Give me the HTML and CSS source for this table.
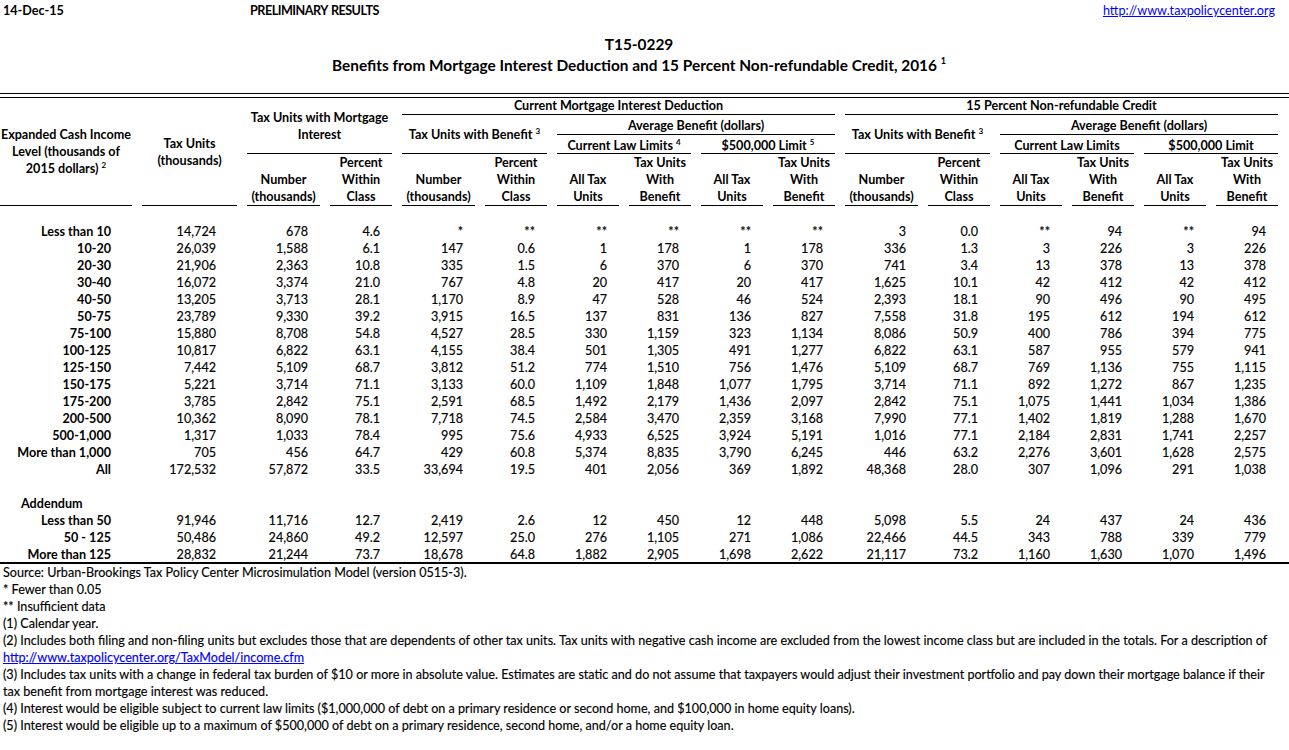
FILE: index.html
```html
<!DOCTYPE html>
<html>
<head>
<meta charset="utf-8">
<title>T15-0229</title>
<link rel="stylesheet" href="styles.css">
</head>
<body>
<div class="top">
  <span class="date">14-Dec-15</span>
  <span class="prelim">PRELIMINARY RESULTS</span>
  <a class="link toplink" href="#">http://www.taxpolicycenter.org</a>
</div>
<div class="title">
  <div>T15-0229</div>
  <div>Benefits from Mortgage Interest Deduction and 15 Percent Non-refundable Credit, 2016 <sup class="tsup">1</sup></div>
</div>
<div class="rule2"></div>
<div class="sheet">
  <div class="h mid u c1 rAll"><span>Expanded Cash Income<br>Level (thousands of<br>2015 dollars) <sup>2</sup></span></div>
  <div class="h mid u c2 rAll"><span>Tax Units<br>(thousands)</span></div>
  <div class="h mid u c3s rTop3"><span>Tax Units with Mortgage<br>Interest</span></div>
  <div class="h u c3 r4"><span>Number<br>(thousands)</span></div>
  <div class="h u c4 r4"><span>Percent<br>Within<br>Class</span></div>

  <div class="h u g1 r1"><span>Current Mortgage Interest Deduction</span></div>
  <div class="h mid u g1a r23"><span>Tax Units with Benefit <sup>3</sup></span></div>
  <div class="h u g1b r2"><span>Average Benefit (dollars)</span></div>
  <div class="h u g1c r3"><span>Current Law Limits <sup>4</sup></span></div>
  <div class="h u g1d r3"><span>$500,000 Limit <sup>5</sup></span></div>
  <div class="h u c5 r4"><span>Number<br>(thousands)</span></div>
  <div class="h u c6 r4"><span>Percent<br>Within<br>Class</span></div>
  <div class="h u c7 r4"><span>All Tax<br>Units</span></div>
  <div class="h u c8 r4"><span>Tax Units<br>With<br>Benefit</span></div>
  <div class="h u c9 r4"><span>All Tax<br>Units</span></div>
  <div class="h u c10 r4"><span>Tax Units<br>With<br>Benefit</span></div>

  <div class="h u g2 r1"><span>15 Percent Non-refundable Credit</span></div>
  <div class="h mid u g2a r23"><span>Tax Units with Benefit <sup>3</sup></span></div>
  <div class="h u g2b r2"><span>Average Benefit (dollars)</span></div>
  <div class="h u g2c r3"><span>Current Law Limits</span></div>
  <div class="h u g2d r3"><span>$500,000 Limit</span></div>
  <div class="h u c11 r4"><span>Number<br>(thousands)</span></div>
  <div class="h u c12 r4"><span>Percent<br>Within<br>Class</span></div>
  <div class="h u c13 r4"><span>All Tax<br>Units</span></div>
  <div class="h u c14 r4"><span>Tax Units<br>With<br>Benefit</span></div>
  <div class="h u c15 r4"><span>All Tax<br>Units</span></div>
  <div class="h u c16 r4"><span>Tax Units<br>With<br>Benefit</span></div>

  <div class="blank"></div>

  <div class="lb">Less than 10</div><div class="d d2">14,724</div><div class="d">678</div><div class="d">4.6</div><div class="d">*</div><div class="d">**</div><div class="d">**</div><div class="d">**</div><div class="d">**</div><div class="d">**</div><div class="d">3</div><div class="d">0.0</div><div class="d">**</div><div class="d">94</div><div class="d">**</div><div class="d">94</div>
  <div class="lb">10-20</div><div class="d d2">26,039</div><div class="d">1,588</div><div class="d">6.1</div><div class="d">147</div><div class="d">0.6</div><div class="d">1</div><div class="d">178</div><div class="d">1</div><div class="d">178</div><div class="d">336</div><div class="d">1.3</div><div class="d">3</div><div class="d">226</div><div class="d">3</div><div class="d">226</div>
  <div class="lb">20-30</div><div class="d d2">21,906</div><div class="d">2,363</div><div class="d">10.8</div><div class="d">335</div><div class="d">1.5</div><div class="d">6</div><div class="d">370</div><div class="d">6</div><div class="d">370</div><div class="d">741</div><div class="d">3.4</div><div class="d">13</div><div class="d">378</div><div class="d">13</div><div class="d">378</div>
  <div class="lb">30-40</div><div class="d d2">16,072</div><div class="d">3,374</div><div class="d">21.0</div><div class="d">767</div><div class="d">4.8</div><div class="d">20</div><div class="d">417</div><div class="d">20</div><div class="d">417</div><div class="d">1,625</div><div class="d">10.1</div><div class="d">42</div><div class="d">412</div><div class="d">42</div><div class="d">412</div>
  <div class="lb">40-50</div><div class="d d2">13,205</div><div class="d">3,713</div><div class="d">28.1</div><div class="d">1,170</div><div class="d">8.9</div><div class="d">47</div><div class="d">528</div><div class="d">46</div><div class="d">524</div><div class="d">2,393</div><div class="d">18.1</div><div class="d">90</div><div class="d">496</div><div class="d">90</div><div class="d">495</div>
  <div class="lb">50-75</div><div class="d d2">23,789</div><div class="d">9,330</div><div class="d">39.2</div><div class="d">3,915</div><div class="d">16.5</div><div class="d">137</div><div class="d">831</div><div class="d">136</div><div class="d">827</div><div class="d">7,558</div><div class="d">31.8</div><div class="d">195</div><div class="d">612</div><div class="d">194</div><div class="d">612</div>
  <div class="lb">75-100</div><div class="d d2">15,880</div><div class="d">8,708</div><div class="d">54.8</div><div class="d">4,527</div><div class="d">28.5</div><div class="d">330</div><div class="d">1,159</div><div class="d">323</div><div class="d">1,134</div><div class="d">8,086</div><div class="d">50.9</div><div class="d">400</div><div class="d">786</div><div class="d">394</div><div class="d">775</div>
  <div class="lb">100-125</div><div class="d d2">10,817</div><div class="d">6,822</div><div class="d">63.1</div><div class="d">4,155</div><div class="d">38.4</div><div class="d">501</div><div class="d">1,305</div><div class="d">491</div><div class="d">1,277</div><div class="d">6,822</div><div class="d">63.1</div><div class="d">587</div><div class="d">955</div><div class="d">579</div><div class="d">941</div>
  <div class="lb">125-150</div><div class="d d2">7,442</div><div class="d">5,109</div><div class="d">68.7</div><div class="d">3,812</div><div class="d">51.2</div><div class="d">774</div><div class="d">1,510</div><div class="d">756</div><div class="d">1,476</div><div class="d">5,109</div><div class="d">68.7</div><div class="d">769</div><div class="d">1,136</div><div class="d">755</div><div class="d">1,115</div>
  <div class="lb">150-175</div><div class="d d2">5,221</div><div class="d">3,714</div><div class="d">71.1</div><div class="d">3,133</div><div class="d">60.0</div><div class="d">1,109</div><div class="d">1,848</div><div class="d">1,077</div><div class="d">1,795</div><div class="d">3,714</div><div class="d">71.1</div><div class="d">892</div><div class="d">1,272</div><div class="d">867</div><div class="d">1,235</div>
  <div class="lb">175-200</div><div class="d d2">3,785</div><div class="d">2,842</div><div class="d">75.1</div><div class="d">2,591</div><div class="d">68.5</div><div class="d">1,492</div><div class="d">2,179</div><div class="d">1,436</div><div class="d">2,097</div><div class="d">2,842</div><div class="d">75.1</div><div class="d">1,075</div><div class="d">1,441</div><div class="d">1,034</div><div class="d">1,386</div>
  <div class="lb">200-500</div><div class="d d2">10,362</div><div class="d">8,090</div><div class="d">78.1</div><div class="d">7,718</div><div class="d">74.5</div><div class="d">2,584</div><div class="d">3,470</div><div class="d">2,359</div><div class="d">3,168</div><div class="d">7,990</div><div class="d">77.1</div><div class="d">1,402</div><div class="d">1,819</div><div class="d">1,288</div><div class="d">1,670</div>
  <div class="lb">500-1,000</div><div class="d d2">1,317</div><div class="d">1,033</div><div class="d">78.4</div><div class="d">995</div><div class="d">75.6</div><div class="d">4,933</div><div class="d">6,525</div><div class="d">3,924</div><div class="d">5,191</div><div class="d">1,016</div><div class="d">77.1</div><div class="d">2,184</div><div class="d">2,831</div><div class="d">1,741</div><div class="d">2,257</div>
  <div class="lb">More than 1,000</div><div class="d d2">705</div><div class="d">456</div><div class="d">64.7</div><div class="d">429</div><div class="d">60.8</div><div class="d">5,374</div><div class="d">8,835</div><div class="d">3,790</div><div class="d">6,245</div><div class="d">446</div><div class="d">63.2</div><div class="d">2,276</div><div class="d">3,601</div><div class="d">1,628</div><div class="d">2,575</div>
  <div class="lb">All</div><div class="d d2">172,532</div><div class="d">57,872</div><div class="d">33.5</div><div class="d">33,694</div><div class="d">19.5</div><div class="d">401</div><div class="d">2,056</div><div class="d">369</div><div class="d">1,892</div><div class="d">48,368</div><div class="d">28.0</div><div class="d">307</div><div class="d">1,096</div><div class="d">291</div><div class="d">1,038</div>

  <div class="blank"></div>
  <div class="add">Addendum</div>

  <div class="lb">Less than 50</div><div class="d d2">91,946</div><div class="d">11,716</div><div class="d">12.7</div><div class="d">2,419</div><div class="d">2.6</div><div class="d">12</div><div class="d">450</div><div class="d">12</div><div class="d">448</div><div class="d">5,098</div><div class="d">5.5</div><div class="d">24</div><div class="d">437</div><div class="d">24</div><div class="d">436</div>
  <div class="lb">50 - 125</div><div class="d d2">50,486</div><div class="d">24,860</div><div class="d">49.2</div><div class="d">12,597</div><div class="d">25.0</div><div class="d">276</div><div class="d">1,105</div><div class="d">271</div><div class="d">1,086</div><div class="d">22,466</div><div class="d">44.5</div><div class="d">343</div><div class="d">788</div><div class="d">339</div><div class="d">779</div>
  <div class="lb">More than 125</div><div class="d d2">28,832</div><div class="d">21,244</div><div class="d">73.7</div><div class="d">18,678</div><div class="d">64.8</div><div class="d">1,882</div><div class="d">2,905</div><div class="d">1,698</div><div class="d">2,622</div><div class="d">21,117</div><div class="d">73.2</div><div class="d">1,160</div><div class="d">1,630</div><div class="d">1,070</div><div class="d">1,496</div>

  <div class="endrule"></div>
</div>
<div class="notes">
  <div>Source: Urban-Brookings Tax Policy Center Microsimulation Model (version 0515-3).</div>
  <div>* Fewer than 0.05</div>
  <div>** Insufficient data</div>
  <div>(1) Calendar year.</div>
  <div>(2) Includes both filing and non-filing units but excludes those that are dependents of other tax units. Tax units with negative cash income are excluded from the lowest income class but are included in the totals. For a description of</div>
  <div><a class="link" href="#">http://www.taxpolicycenter.org/TaxModel/income.cfm</a></div>
  <div>(3) Includes tax units with a change in federal tax burden of $10 or more in absolute value. Estimates are static and do not assume that taxpayers would adjust their investment portfolio and pay down their mortgage balance if their</div>
  <div>tax benefit from mortgage interest was reduced.</div>
  <div>(4) Interest would be eligible subject to current law limits ($1,000,000 of debt on a primary residence or second home, and $100,000 in home equity loans).</div>
  <div>(5) Interest would be eligible up to a maximum of $500,000 of debt on a primary residence, second home, and/or a home equity loan.</div>
</div>
</body>
</html>
```

FILE: styles.css
```css
* { box-sizing: border-box; }
html, body { margin: 0; padding: 0; }
body {
  font-family: Lato, "Liberation Sans", sans-serif;
  font-size: 12.6px;
  color: #000;
  background: #fff;
  width: 1289px;
  overflow: hidden;
}
sup { font-size: 8px; line-height: 0; vertical-align: 5px; }
.tsup { font-size: 9px; vertical-align: 7px; }

.top { display: flex; height: 20px; padding-top: 2px; line-height: 17px; font-weight: bold; }
.date { width: 250px; padding-left: 3px; }
.prelim { letter-spacing: -0.5px; word-spacing: 1px; }
.link { color: #0000ff; text-decoration: underline; font-weight: normal; }
.toplink { margin-left: auto; padding-right: 14px; }

.title { width: 1278px; margin-top: 14px; text-align: center; font-weight: bold; font-size: 15.4px; line-height: 21px; }
.rule2 { margin-top: 17px; height: 5px; border-top: 1px solid #000; border-bottom: 1px solid #000; }

.sheet {
  display: grid;
  grid-template-columns: 132px 95px 73px 62px 73px 62px 62px 62px 62px 62px 73px 62px 62px 62px 62px 62px;
  grid-template-rows: 17px 20px 19px 52px repeat(20, 17px) 16px 2px;
  column-gap: 10px;
  line-height: 17px;
}
.h { display: flex; flex-direction: column; justify-content: flex-end; align-items: center; text-align: center; font-weight: bold; white-space: nowrap; }
.mid { justify-content: center; }
.u { border-bottom: 1px solid #000; }

.rAll { grid-row: 1 / 5; }
.rTop3 { grid-row: 1 / 4; }
.r1 { grid-row: 1; line-height: 16px; }
.r2 { grid-row: 2; }
.r3 { grid-row: 3; line-height: 15px; }
.r23 { grid-row: 2 / 4; }
.r4 { grid-row: 4; }

.c1 { grid-column: 1; }
.c2 { grid-column: 2; }
.c3s { grid-column: 3 / 5; }
.c3 { grid-column: 3; }
.c4 { grid-column: 4; }
.c5 { grid-column: 5; }
.c6 { grid-column: 6; }
.c7 { grid-column: 7; }
.c8 { grid-column: 8; }
.c9 { grid-column: 9; }
.c10 { grid-column: 10; }
.c11 { grid-column: 11; }
.c12 { grid-column: 12; }
.c13 { grid-column: 13; }
.c14 { grid-column: 14; }
.c15 { grid-column: 15; }
.c16 { grid-column: 16; }
.g1 { grid-column: 5 / 11; }
.g1a { grid-column: 5 / 7; }
.g1b { grid-column: 7 / 11; }
.g1c { grid-column: 7 / 9; }
.g1d { grid-column: 9 / 11; }
.g2 { grid-column: 11 / 17; }
.g2a { grid-column: 11 / 13; }
.g2b { grid-column: 13 / 17; }
.g2c { grid-column: 13 / 15; }
.g2d { grid-column: 15 / 17; }

.blank { grid-column: 1 / -1; }
.add { grid-column: 1 / -1; padding-left: 21px; font-weight: bold; }
.lb { text-align: right; padding-right: 21px; font-weight: bold; white-space: nowrap; }
.d { text-align: right; padding-right: 12px; white-space: nowrap; -webkit-text-stroke: 0.15px #000; }
.d2 { padding-right: 21px; }
.endrule { grid-column: 1 / -1; height: 2px; margin-right: -11px; background: #000; }

.notes { padding-left: 3px; line-height: 17px; white-space: nowrap; -webkit-text-stroke: 0.15px #000; }
.notes .link { -webkit-text-stroke: 0.15px #0000ff; }
```
